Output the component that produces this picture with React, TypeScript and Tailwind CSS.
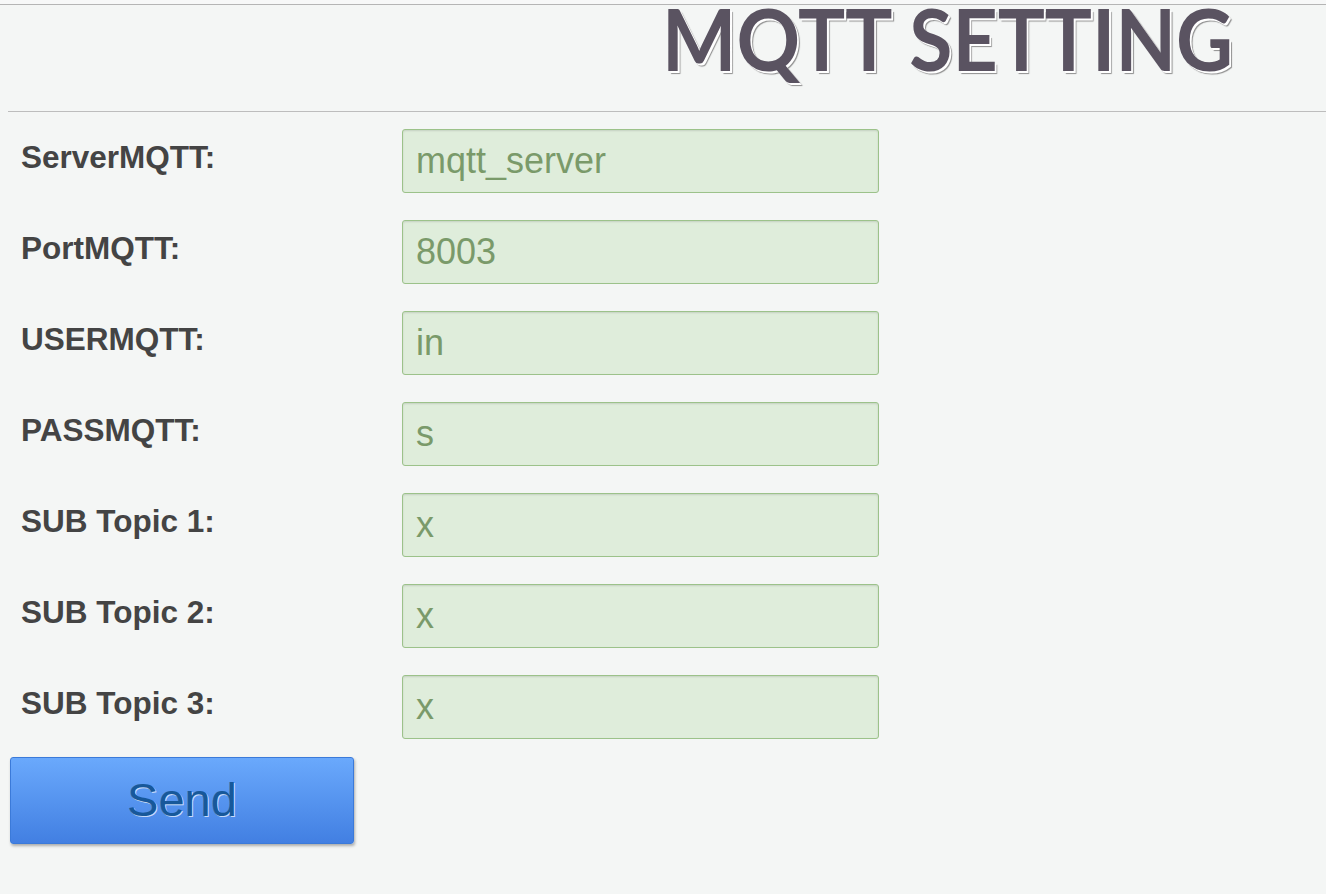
import React from 'react';

const fields = [
  { label: 'ServerMQTT:', value: 'mqtt_server' },
  { label: 'PortMQTT:', value: '8003' },
  { label: 'USERMQTT:', value: 'in' },
  { label: 'PASSMQTT:', value: 's' },
  { label: 'SUB Topic 1:', value: 'x' },
  { label: 'SUB Topic 2:', value: 'x' },
  { label: 'SUB Topic 3:', value: 'x' },
];

export default function App() {
  return (
    <div className="min-h-[894px] w-full bg-[#f4f6f5] font-['Liberation_Sans',Arial,sans-serif]">
      <div className="h-[4px] bg-[#f7f8f8]" />
      <div className="border-t border-[#b5b5b5]">
        {/* header */}
        <div className="flex h-[106px] items-start justify-end pr-[93px]">
          <h1 className="mt-[-1px] origin-right scale-x-[0.915] font-['Lato',sans-serif] text-[86px] font-bold leading-[0.8] text-[#5a5361] [text-shadow:2px_2px_0_#fff,3px_3px_1px_#8f8f8f]">
            MQTT SETTING
          </h1>
        </div>
        <div className="ml-[8px] border-t border-[#bdbdbd]" />

        {/* form */}
        <form className="flex flex-col gap-[27px] pt-[17px]" onSubmit={(e) => e.preventDefault()}>
          {fields.map((f) => (
            <div key={f.label} className="flex items-start">
              <label className="w-[402px] pl-[21px] pt-[10px] text-[31.5px] font-bold leading-[36px] text-[#444]">
                {f.label}
              </label>
              <input
                readOnly
                value={f.value}
                className="h-[64px] w-[477px] rounded-[3px] border border-[#9cc28a] bg-[#dfeddb] px-[13px] text-[36px] text-[#7a9a6a] shadow-[inset_0_1px_2px_rgba(0,0,0,0.12)] outline-none"
              />
            </div>
          ))}
        </form>

        <div className="pl-[10px] pt-[18px]">
          <button className="h-[87px] w-[344px] rounded-[3px] border border-[#3b7ad9] bg-gradient-to-b from-[#6aa9fc] to-[#427fe2] text-[47px] text-[#17589a] shadow-[1px_2px_3px_rgba(0,0,0,0.3)] [text-shadow:1px_1px_0_rgba(255,255,255,0.7)]">
            Send
          </button>
        </div>
      </div>
    </div>
  );
}
